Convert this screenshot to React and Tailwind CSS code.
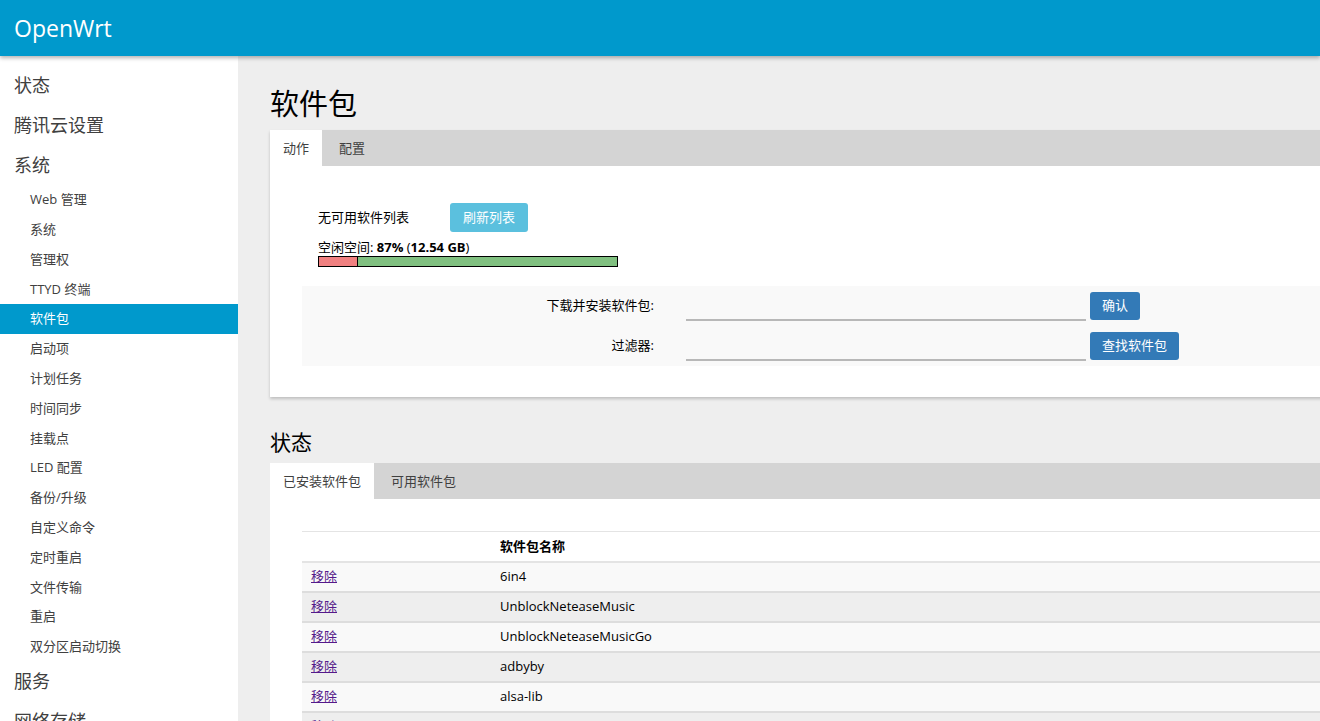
import React from "react";

const font = { fontFamily: '"Open Sans", "Noto Sans", "Noto Sans CJK SC", sans-serif' };

const topMenu = ["状态", "腾讯云设置", "系统"];
const subMenu = [
  "Web 管理",
  "系统",
  "管理权",
  "TTYD 终端",
  "软件包",
  "启动项",
  "计划任务",
  "时间同步",
  "挂载点",
  "LED 配置",
  "备份/升级",
  "自定义命令",
  "定时重启",
  "文件传输",
  "重启",
  "双分区启动切换",
];

const packages = [
  "6in4",
  "UnblockNeteaseMusic",
  "UnblockNeteaseMusicGo",
  "adbyby",
  "alsa-lib",
  "autosamba",
];

const Tabs = ({ items }) => (
  <div className="flex h-[36px] bg-[#d4d4d4] text-[13px] text-[#404040]">
    {items.map((t, i) => (
      <div
        key={t}
        className={
          i === 0
            ? "flex items-center bg-white px-[13px] pt-[1px]"
            : "flex items-center px-[17px] pt-[1px]"
        }
      >
        {t}
      </div>
    ))}
  </div>
);

const App = () => {
  return (
    <div className="h-[721px] w-[1320px] overflow-hidden bg-[#eeeeee]" style={font}>
      {/* Header */}
      <div className="relative z-10 flex h-[56px] items-center bg-[#0099cc] pl-[14px] shadow-[0_2px_4px_rgba(0,0,0,0.3)]">
        <span className="text-[23px] text-white">OpenWrt</span>
      </div>

      <div className="flex">
        {/* Sidebar */}
        <div className="h-[665px] w-[238px] shrink-0 bg-white pt-[9px]">
          {topMenu.map((t) => (
            <div key={t} className="flex h-[40px] items-center pl-[14px] text-[18px] text-[#404040]">
              {t}
            </div>
          ))}
          <div>
            {subMenu.map((t) => (
              <div
                key={t}
                className={
                  t === "软件包"
                    ? "flex h-[29.8px] items-center bg-[#0099cc] pl-[30px] text-[13px] text-white"
                    : "flex h-[29.8px] items-center pl-[30px] text-[13px] text-[#404040]"
                }
              >
                {t}
              </div>
            ))}
          </div>
          <div className="flex h-[40px] items-center pl-[14px] text-[18px] text-[#404040]">服务</div>
          <div className="flex h-[40px] items-center pl-[14px] text-[18px] text-[#404040]">网络存储</div>
        </div>

        {/* Main */}
        <div className="w-[1120px] shrink-0 pl-[32px] pt-[28px]">
          <h1 className="h-[46px] text-[29px] leading-[40px] text-black">软件包</h1>
          <div className="bg-white shadow-[0_2px_3px_rgba(0,0,0,0.2)]">
            <Tabs items={["动作", "配置"]} />
            <div className="px-[32px] pb-[31px] pt-[37px]">
              <div className="pl-[16px] text-[13px] text-black">
                <div className="flex items-center">
                  <span className="w-[132px]">无可用软件列表</span>
                  <button className="h-[29px] rounded-[3px] bg-[#5bc0de] px-[13px] text-[13px] text-white">
                    刷新列表
                  </button>
                </div>
                <div className="mt-[7px] leading-[16px]">
                  空闲空间: <b>87%</b> (<b>12.54 GB</b>)
                </div>
                <div className="mt-[1px] flex h-[11px] w-[300px] border border-black">
                  <div className="w-[38px] bg-[#f08080]" />
                  <div className="flex-1 border-l border-black bg-[#80c080]" />
                </div>
              </div>
              <div className="mt-[19px] bg-[#f9f9f9] py-[5px] text-[13px] text-black">
                <div className="flex h-[30px] items-center">
                  <div className="w-[352px] text-right">下载并安装软件包:</div>
                  <div className="ml-[32px] mt-[2px] h-[28px] w-[400px] border-b-2 border-[#b8b8b8]" />
                  <button className="ml-[4px] h-[28px] rounded-[3px] bg-[#337ab7] px-[12px] text-white">确认</button>
                </div>
                <div className="mt-[10px] flex h-[30px] items-center">
                  <div className="w-[352px] text-right">过滤器:</div>
                  <div className="ml-[32px] mt-[2px] h-[28px] w-[400px] border-b-2 border-[#b8b8b8]" />
                  <button className="ml-[4px] h-[28px] rounded-[3px] bg-[#337ab7] px-[12px] text-white">查找软件包</button>
                </div>
              </div>
            </div>
          </div>

          <h2 className="mt-[30px] h-[36px] text-[21px] leading-[30px] text-black">状态</h2>
          <div className="bg-white">
            <Tabs items={["已安装软件包", "可用软件包"]} />
            <div className="px-[32px] pt-[32px]">
              <table className="w-full border-collapse text-[13px] text-black">
                <thead>
                  <tr className="h-[30px] border-t border-b-2 border-[#e4e4e4] bg-white">
                    <th className="w-[190px]" />
                    <th className="pl-[8px] text-left font-bold">软件包名称</th>
                  </tr>
                </thead>
                <tbody>
                  {packages.map((p, i) => (
                    <tr
                      key={p}
                      className={
                        i % 2 === 0
                          ? "h-[30px] border-b-2 border-[#dddddd] bg-[#f9f9f9]"
                          : "h-[30px] border-b-2 border-[#dddddd] bg-[#eeeeee]"
                      }
                    >
                      <td className="pl-[9px]">
                        <a className="text-[#551a8b] underline">移除</a>
                      </td>
                      <td className="pl-[8px]">{p}</td>
                    </tr>
                  ))}
                </tbody>
              </table>
            </div>
          </div>
        </div>
      </div>
    </div>
  );
};

export default App;
